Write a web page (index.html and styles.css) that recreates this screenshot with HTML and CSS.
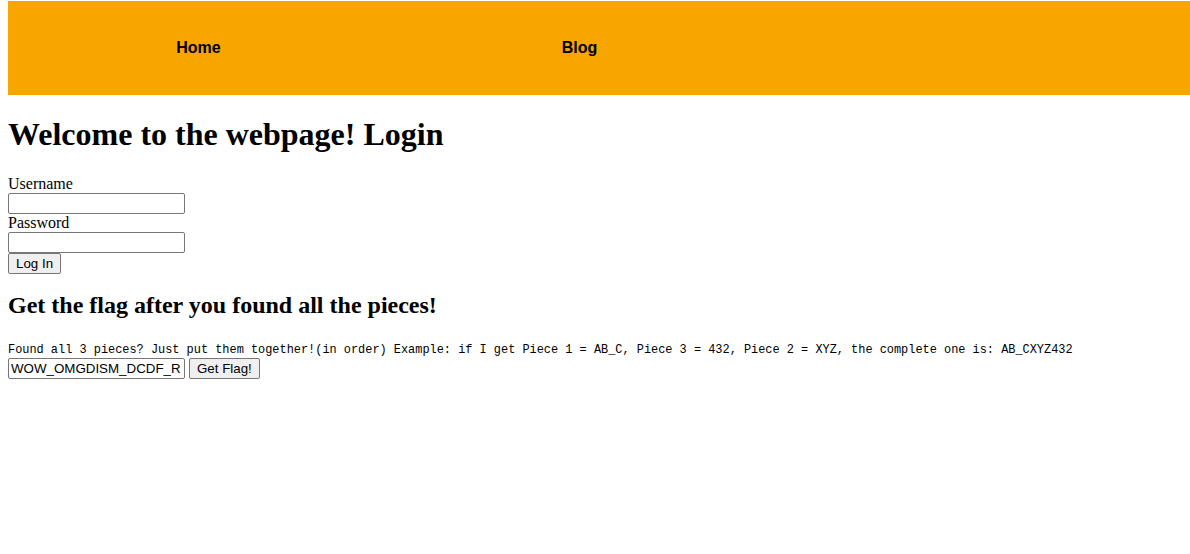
FILE: index.html
```html
<!DOCTYPE html>
<html>
<head>
<meta charset="utf-8">
<link rel="stylesheet" href="styles.css">
</head>
<body>
<nav class="nav">
  <ul class="nav-list">
    <li class="nav-item"><a class="nav-link" href="#">Home</a></li>
    <li class="nav-item"><a class="nav-link" href="#">Blog</a></li>
  </ul>
</nav>
<h1 class="title">Welcome to the webpage! Login</h1>
<form class="login">
  <label class="label">Username</label>
  <input class="field" type="text">
  <label class="label">Password</label>
  <input class="field" type="password">
  <div class="row"><button class="btn" type="button">Log In</button></div>
</form>
<h2 class="subtitle">Get the flag after you found all the pieces!</h2>
<div class="hint">Found all 3 pieces? Just put them together!(in order) Example: if I get Piece 1 = AB_C, Piece 3 = 432, Piece 2 = XYZ, the complete one is: AB_CXYZ432</div>
<div class="flag-row">
  <input class="field flag-field" type="text" value="WOW_OMGDISM_DCDF_R">
  <button class="btn" type="button">Get Flag!</button>
</div>
</body>
</html>
```
FILE: styles.css
```css
html, body {
  background: #ffffff;
}
body {
  margin: 1px 0 8px 8px;
  font-family: "Liberation Serif", "Times New Roman", serif;
  font-size: 16px;
  color: #000;
}
.nav {
  background: #f8a500;
  height: 94px;
}
.nav-list {
  list-style: none;
  margin: 0;
  padding: 0;
  display: flex;
  height: 100%;
}
.nav-item {
  width: 381px;
  display: flex;
  align-items: center;
  justify-content: center;
}
.nav-link {
  font-family: "Liberation Sans", Arial, sans-serif;
  font-weight: bold;
  font-size: 16px;
  color: #000;
  text-decoration: none;
}
.title {
  font-size: 32px;
  font-weight: bold;
  margin: 21.44px 0;
  line-height: 37px;
}
.login {
  display: flex;
  flex-direction: column;
  align-items: flex-start;
}
.label {
  display: block;
  line-height: 18px;
  height: 18px;
}
.field {
  box-sizing: border-box;
  width: 177px;
  height: 21px;
  margin: 0;
  padding: 1px 2px;
  border: 1px solid #767676;
  border-radius: 2px;
  font-family: "Liberation Sans", Arial, sans-serif;
  font-size: 13.33px;
  color: #000;
  background: #fff;
}
.row {
  display: flex;
}
.btn {
  box-sizing: border-box;
  height: 21px;
  margin: 0;
  padding: 1px 7px;
  border: 1px solid #767676;
  border-radius: 2px;
  background: #efefef;
  font-family: "Liberation Sans", Arial, sans-serif;
  font-size: 13.33px;
  color: #000;
}
.subtitle {
  font-size: 24px;
  font-weight: bold;
  margin: 17px 0 24px;
  line-height: 28px;
}
.hint {
  font-family: "Liberation Mono", "DejaVu Sans Mono", monospace;
  font-size: 11.92px;
  line-height: 15px;
  white-space: nowrap;
}
.flag-row {
  display: flex;
  gap: 4px;
  margin-top: 0;
}
```
